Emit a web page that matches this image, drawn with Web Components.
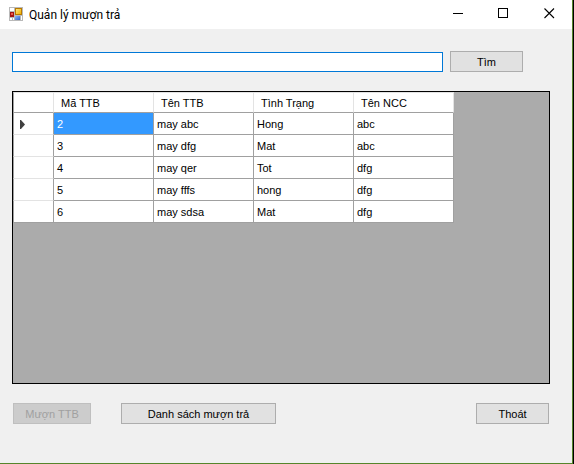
<!DOCTYPE html>
<html lang="vi">
<head>
<meta charset="utf-8">
<title>Quản lý mượn trả</title>
<style>
  html, body { height: 100%; margin: 0; }
  body { background: #000; font: 11px/13px "Liberation Sans", Arial, sans-serif; color: #000; }
</style>
</head>
<body>
<app-window>
  <title-bar slot="title">Quản lý mượn trả</title-bar>
  <search-bar label="Từ khóa">Tìm</search-bar>
  <data-grid></data-grid>
  <action-bar>
    <form-button size="small" disabled>Mượn TTB</form-button>
    <form-button size="large">Danh sách mượn trả</form-button>
    <form-button slot="end">Thoát</form-button>
  </action-bar>
</app-window>

<script>
const define = (name, html, setup) => {
  const template = document.createElement('template');
  template.innerHTML = html;
  customElements.define(name, class extends HTMLElement {
    constructor() {
      super();
      this.attachShadow({ mode: 'open' }).append(template.content.cloneNode(true));
    }
    connectedCallback() { if (setup) setup(this, this.shadowRoot); }
  });
};

define('app-window', `
  <style>
    :host { display: flex; flex-direction: column; box-sizing: border-box; min-height: 100%;
      margin-right: 1px; background: #f0f0f0;
      border: solid #56852b; border-width: 0 1px 1px 0; }
    main { flex: 1; display: flex; flex-direction: column; padding: 22px 22px 39px 12px; }
  </style>
  <slot name="title"></slot>
  <main><slot></slot></main>`);

define('title-bar', `
  <style>
    :host { display: flex; align-items: center; height: 29px; background: #fff; padding-left: 9px;
      font: 12px/16px Roboto, "Noto Sans", sans-serif; }
    h1 { flex: 1; margin: 0 0 0 6px; font: inherit; }
    .caption { display: flex; }
    button { display: grid; place-items: center; width: 45px; height: 29px; padding: 0 2px 2px 0; border: 0; background: none; }
    button:last-child { padding-right: 0; }
    svg { display: block; }
    .icon { margin-bottom: 2px; }
  </style>
  <svg class="icon" width="14" height="14" viewBox="0 0 14 14" shape-rendering="crispEdges" aria-hidden="true">
    <defs>
      <linearGradient id="gold" x2="1" y2="1"><stop stop-color="#ffe680"/><stop offset="1" stop-color="#f0b000"/></linearGradient>
      <linearGradient id="blue" x2="1" y2="1"><stop stop-color="#8fb8f8"/><stop offset="1" stop-color="#2f62cc"/></linearGradient>
    </defs>
    <path fill="#b9b9b9" d="M0 0h14v14H0z"/>
    <path fill="#fff" d="M1 1h4v3H1zM1 11h2v2H1zM4 11h1v2H4zM12 9h1v4h-1z"/>
    <path fill="#a31515" d="M1 5h4v5H1z"/><path fill="#ee5a48" d="M2 6h2v2H2z"/>
    <path fill="#b87900" d="M6 1h7v7H6z"/><path fill="url(#gold)" d="M7 2h5v5H7z"/>
    <path fill="url(#blue)" d="M6 9h5v4H6z"/>
  </svg>
  <h1><slot></slot></h1>
  <div class="caption">
    <button type="button" aria-label="Thu nhỏ"><svg width="11" height="11" viewBox="0 0 11 11" shape-rendering="crispEdges"><path stroke="#000" d="M0 5.5h10"/></svg></button>
    <button type="button" aria-label="Phóng to"><svg width="11" height="11" viewBox="0 0 11 11" shape-rendering="crispEdges"><path fill="none" stroke="#000" d="M.5 .5h9v9h-9z"/></svg></button>
    <button type="button" aria-label="Đóng"><svg width="11" height="11" viewBox="0 0 11 11"><path stroke="#000" stroke-width="1.1" d="M.5 .5l9.500 9.500M10 .5l-9.500 9.500"/></svg></button>
  </div>`);

define('form-button', `
  <style>
    :host { display: block; width: 73px; }
    :host([size=small]) { width: 78px; }
    :host([size=large]) { width: 155px; }
    button { display: block; box-sizing: border-box; width: 100%; height: 21px; padding: 2px 0 0;
      border: 1px solid #adadad; background: #e1e1e1; color: #000; font: inherit; white-space: nowrap; }
    button:disabled { background: #ccc; border-color: #bfbfbf; color: #a0a0a0; }
  </style>
  <button type="button"><slot></slot></button>`,
  (host, root) => { root.querySelector('button').disabled = host.hasAttribute('disabled'); });

define('search-bar', `
  <style>
    :host { display: flex; align-items: flex-end; gap: 7px; margin-right: 27px; }
    form-button { flex: none; }
    input { flex: 1; min-width: 0; box-sizing: border-box; height: 20px; padding: 2px 3px; margin: 0;
      border: 1px solid #0078d7; border-radius: 0; background: #fff; font: inherit; outline: 0; }
  </style>
  <input type="text"><form-button><slot></slot></form-button>`,
  (host, root) => root.querySelector('input').setAttribute('aria-label', host.getAttribute('label')));

define('data-grid', `
  <style>
    :host { display: block; flex: 1; margin: 19px 0; border: 1px solid #000; background: #ababab; overflow: auto; }
    table { table-layout: fixed; width: 441px; border-spacing: 0; background: #fff; }
    col { width: 100px; }
    col:first-child { width: 41px; }
    th, td { box-sizing: border-box; padding: 2px 3px 0; text-align: left; font-weight: 400;
      border: solid #a0a0a0; border-width: 0 1px 1px 0; height: 22px; }
    thead th { height: 21px; padding: 2px 7px 0; border-top: 1px solid #e3e3e3; border-right-color: #e3e3e3; }
    th:first-child { border-left: 1px solid #a0a0a0; }
    tbody th { border-bottom-color: #e3e3e3; padding: 2px 6px 0; }
    tbody tr:last-child th { border-bottom-color: #a0a0a0; }
    .selected { background: #39f; color: #fff; }
    svg { display: block; }
  </style>
  <table>
    <colgroup><col><col><col><col><col></colgroup>
    <thead><tr><th></th></tr></thead>
    <tbody></tbody>
  </table>`,
  (host, root) => {
    const head = root.querySelector('thead tr');
    for (const title of ['Mã TTB', 'Tên TTB', 'Tình Trạng', 'Tên NCC']) {
      const th = document.createElement('th');
      th.scope = 'col';
      th.textContent = title;
      head.append(th);
    }
    const rows = [
      ['2', 'may abc', 'Hong', 'abc'],
      ['3', 'may dfg', 'Mat', 'abc'],
      ['4', 'may qer', 'Tot', 'dfg'],
      ['5', 'may fffs', 'hong', 'dfg'],
      ['6', 'may sdsa', 'Mat', 'dfg'],
    ];
    const body = root.querySelector('tbody');
    rows.forEach((row, i) => {
      const tr = body.insertRow();
      const th = document.createElement('th');
      if (i === 0) th.innerHTML = '<svg width="6" height="9" viewBox="0 0 6 9" aria-hidden="true"><path fill="#404040" d="M0 0h1l4 4.500-4 4.500h-1z"/></svg>';
      tr.append(th);
      row.forEach((text, j) => {
        const td = tr.insertCell();
        td.textContent = text;
        if (i === 0 && j === 0) td.className = 'selected';
      });
    });
  });

define('action-bar', `
  <style>
    :host { display: flex; justify-content: space-between; padding: 0 1px; }
    div { display: flex; gap: 30px; }
  </style>
  <div><slot></slot></div><slot name="end"></slot>`);
</script>
</body>
</html>
